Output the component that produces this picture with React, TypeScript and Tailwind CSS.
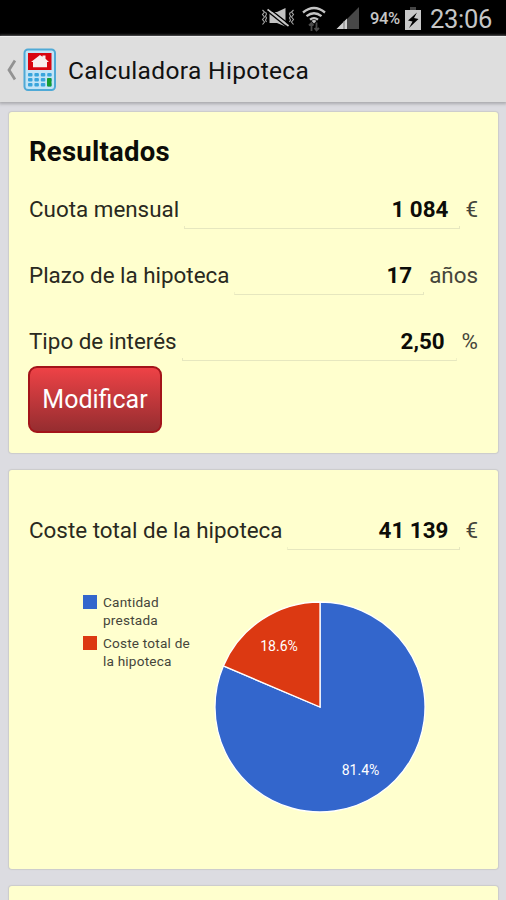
import type { ReactNode } from "react"

type ResultRowProps = {
  label: string
  value: string
  unit: string
}

const PIE_RADIUS = 105

const slices = [
  { label: ["Cantidad", "prestada"], percent: 81.4, color: "#3366cc" },
  { label: ["Coste total de", "la hipoteca"], percent: 18.6, color: "#dc3912" },
]

function pointAt(percent: number, radius: number) {
  const angle = (percent / 100) * Math.PI * 2
  return { x: Math.sin(angle) * radius, y: -Math.cos(angle) * radius }
}

function slicePath(start: number, size: number) {
  const from = pointAt(start, PIE_RADIUS)
  const to = pointAt(start + size, PIE_RADIUS)
  const large = size > 50 ? 1 : 0
  return `M0 0L${from.x} ${from.y}A${PIE_RADIUS} ${PIE_RADIUS} 0 ${large} 1 ${to.x} ${to.y}Z`
}

function VibrateIcon() {
  return (
    <svg width="34" height="20" viewBox="0 0 34 20" fill="none" className="shrink-0">
      <path d="M1.500 2l2 2-2 2.500 2 2.500-2 2.500 2 2.500-2 2.500M4.500 4l1 2-1 2 1 2-1 2 1 2" stroke="#a8a8a8" strokeWidth="1.100" />
      <path d="M32.500 2l-2 2 2 2.500-2 2.500 2 2.500-2 2.500 2 2.500M29.500 4l-1 2 1 2-1 2 1 2-1 2" stroke="#a8a8a8" strokeWidth="1.100" />
      <path d="M8.500 4H16l8.500-4v18.500L16 15H8.500z" fill="#c2c2c2" />
      <path d="M8 .5l20.500 16" stroke="#000" strokeWidth="1.500" />
      <path d="M6.500 1.500l21 16.500" stroke="#c8c8c8" strokeWidth="1.800" />
      <path d="M6 3l20.500 16.500" stroke="#000" strokeWidth="1.300" />
    </svg>
  )
}

function WifiIcon() {
  return (
    <svg width="24" height="26" viewBox="0 0 24 26" fill="none" className="shrink-0">
      <path d="M1 6.500q11-9 22 0M4.500 10.200q7.500-6 15 0M8 13.600q4-3 8 0" stroke="#c4c4c4" strokeWidth="2.300" />
      <path d="M9.500 14.800q2.500-1.500 5 0L12 17.500z" fill="#c4c4c4" />
      <path d="M9.500 25v-8M7 19.500l2.500-2.500 2 2.500M14.500 16.500v8M12.500 22l2 2.500 2.500-2.500" stroke="#4b4b4b" strokeWidth="1.800" />
    </svg>
  )
}

function SignalIcon() {
  return (
    <svg width="24" height="24" viewBox="0 0 24 24" className="shrink-0">
      <path d="M23 1v22H1z" fill="#484848" />
      <path d="M11 12.500V23H.5z" fill="#d0d0d0" />
      <path d="M8 15v8" stroke="#777" strokeWidth="1" />
    </svg>
  )
}

function BatteryIcon() {
  return (
    <svg width="16" height="23" viewBox="0 0 16 23" className="shrink-0">
      <path d="M5 0h6v3H5z" fill="#444" />
      <path d="M0 3h16v20H0z" fill="#c8c8c8" />
      <path d="M12 5.500L3 13.500l4.500 1-3.500 6.500 9.500-9-4.500-1z" fill="#000" />
    </svg>
  )
}

function CalculatorIcon() {
  return (
    <svg width="34" height="44" viewBox="0 0 34 44" className="shrink-0">
      <rect x="1.500" y="1.500" width="30.500" height="40.500" rx="3.500" fill="#c3e4f6" stroke="#4fa9d6" strokeWidth="2" />
      <path d="M5 5h23.500v17H5z" fill="#d90510" />
      <path d="M8 14l9-7 2.500 1.700V7.500h3v3.300L26 14h-2v5.200H10V14z" fill="#f8eeee" />
      {[0, 1, 2].map((row) =>
        [0, 1, 2, 3].map((col) => (
          <rect
            key={`${row}-${col}`}
            x={5 + col * 6.4}
            y={25 + row * 5}
            width="4.500"
            height="3.500"
            rx="1"
            fill="#39a5dc"
          />
        )),
      )}
      <rect x="24" y="30" width="4.500" height="8.500" rx="1" fill="#169c30" />
    </svg>
  )
}

function StatusBar() {
  return (
    <div className="flex h-9 items-center bg-black pl-[261px] text-[#c6c6c6]">
      <VibrateIcon />
      <div className="ml-[7px] pt-px">
        <WifiIcon />
      </div>
      <div className="ml-[10px]">
        <SignalIcon />
      </div>
      <span className="ml-[10px] w-[35px] pt-0.5 text-[16.5px] font-medium tracking-[-0.4px]">94%</span>
      <BatteryIcon />
      <span className="ml-[9px] pt-0.5 text-[25.5px] tracking-[-0.3px]">23:06</span>
    </div>
  )
}

function AppBar() {
  return (
    <header className="relative flex h-[66px] items-center border-t border-[#efefef] bg-[#dedede] shadow-[0_1px_3px_1px_#a9a9ad]">
      <svg width="10" height="22" viewBox="0 0 10 22" fill="none" className="ml-[6px]">
        <path d="M9 1.500L3 11l6 9.500" stroke="#929292" strokeWidth="2.800" />
      </svg>
      <div className="ml-[7px]">
        <CalculatorIcon />
      </div>
      <h1 className="ml-[11px] pt-1 text-[24.5px] tracking-[0.35px] text-[#111]">Calculadora Hipoteca</h1>
    </header>
  )
}

function Card({ className, children }: { className: string; children?: ReactNode }) {
  return (
    <section
      className={`rounded-[3px] bg-[#ffffce] px-5 shadow-[0_0_1px_1px_#cbcbcb] ${className}`}
    >
      {children}
    </section>
  )
}

function ResultRow({ label, value, unit }: ResultRowProps) {
  return (
    <div className="flex h-[66px] items-end gap-[5px] pb-[5px] text-[22.4px] leading-[27px] text-[#292920]">
      <span className="pb-[6px] whitespace-nowrap">{label}</span>
      <div className="flex-1">
        <div className="pr-3 text-right font-bold text-[#0c0c08]">{value}</div>
        <div className="h-[6px] border-x border-b border-[#e6e7bf] [clip-path:inset(3px_0_0_0)]" />
      </div>
      <span className="pb-[6px] text-[#45453a]">{unit}</span>
    </div>
  )
}

function PieChart() {
  return (
    <svg width="212" height="212" viewBox="-106 -106 212 212" className="shrink-0">
      <path d={slicePath(0, slices[0].percent)} fill={slices[0].color} stroke="#fff" strokeWidth="1.300" />
      <path
        d={slicePath(slices[0].percent, slices[1].percent)}
        fill={slices[1].color}
        stroke="#fff"
        strokeWidth="1.300"
      />
      <g fill="#fff" fontSize="14" textAnchor="middle">
        <text x="40.500" y="67.500">
          81.4%
        </text>
        <text x="-41" y="-56.500">
          18.6%
        </text>
      </g>
    </svg>
  )
}

function Legend() {
  return (
    <ul className="w-[130.5px] text-[13.6px] leading-[18px] tracking-[0.2px] text-[#45453b]">
      {slices.map((slice) => (
        <li key={slice.color} className="mb-[5px] flex gap-[6px]">
          <span className="mt-0.5 size-[14px] shrink-0" style={{ background: slice.color }} />
          <span>
            {slice.label[0]}
            <br />
            {slice.label[1]}
          </span>
        </li>
      ))}
    </ul>
  )
}

export default function App() {
  return (
    <div className="h-[900px] w-[506px] overflow-hidden bg-[#dcdce1] font-[Roboto,sans-serif]">
      <StatusBar />
      <AppBar />
      <main className="flex flex-col gap-[17px] pt-[10px] pr-[8px] pl-[9px]">
        <Card className="h-[341px]">
          <h2 className="h-14 pt-[22px] text-[27.5px] leading-[36px] font-bold tracking-[0.25px] text-[#0c0c08]">
            Resultados
          </h2>
          <ResultRow label="Cuota mensual" value="1 084" unit="€" />
          <ResultRow label="Plazo de la hipoteca" value="17" unit="años" />
          <ResultRow label="Tipo de interés" value="2,50" unit="%" />
          <button
            type="button"
            className="-ml-px h-[67px] w-[134px] rounded-[9px] border-2 border-[#a3141a] bg-linear-to-b from-[#ee4246] to-[#962d30] text-[25px] text-white"
          >
            Modificar
          </button>
        </Card>
        <Card className="h-[399px] pt-[19px]">
          <ResultRow label="Coste total de la hipoteca" value="41 139" unit="€" />
          <div className="flex pt-[46px] pl-[54px]">
            <div className="-mt-[8px]">
              <Legend />
            </div>
            <PieChart />
          </div>
        </Card>
        <Card className="h-[60px]" />
      </main>
    </div>
  )
}
